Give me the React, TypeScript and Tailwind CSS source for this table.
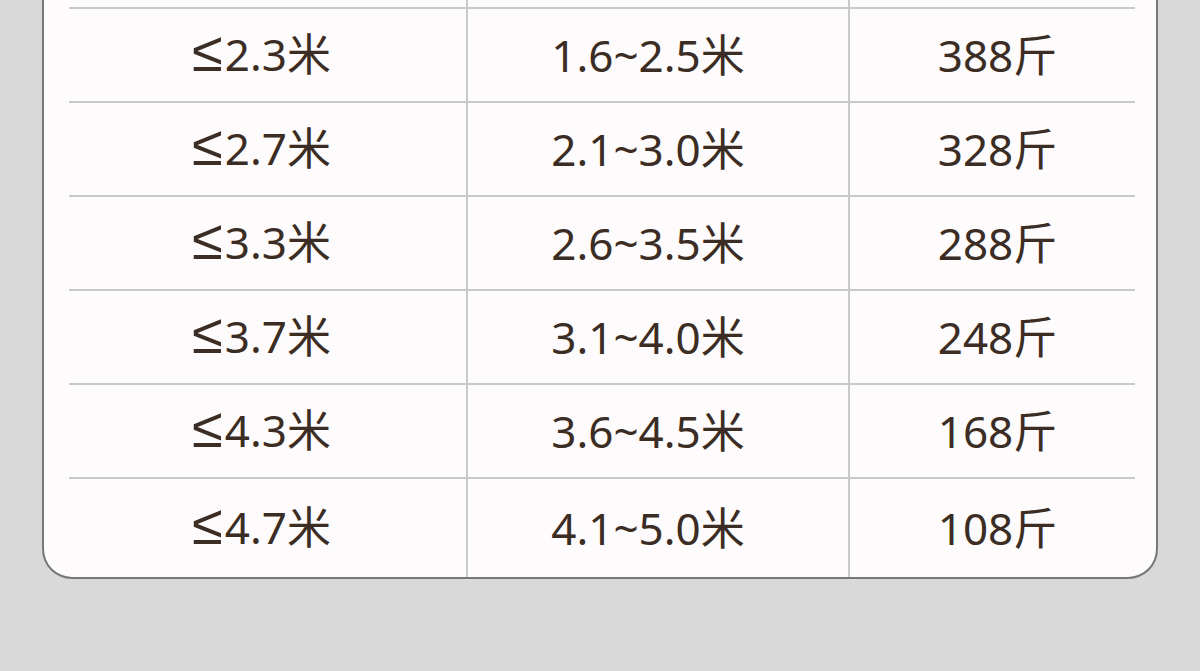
import React from "react";

const rows: [string, string, string][] = [
  ["2.3米", "1.6~2.5米", "388斤"],
  ["2.7米", "2.1~3.0米", "328斤"],
  ["3.3米", "2.6~3.5米", "288斤"],
  ["3.7米", "3.1~4.0米", "248斤"],
  ["4.3米", "3.6~4.5米", "168斤"],
  ["4.7米", "4.1~5.0米", "108斤"],
];

export default function App() {
  return (
    <div
      className="h-[671px] w-[1200px] bg-[#d9d9d9] overflow-hidden flex flex-col justify-end pb-[92px]"
      style={{ fontFamily: '"Noto Sans", "Noto Sans CJK SC", sans-serif' }}
    >
      <div className="ml-[42px] w-[1116px] shrink-0 border-2 border-t-0 border-[#777777] rounded-b-[30px] bg-[#fdfbfb] pl-[25px] pr-[21px]">
        <div className="grid grid-cols-[399px_382px_1fr] text-[#3b2c24] text-[44px] leading-none">
          <div className="h-[94px] border-b-2 border-r-2 border-[#c9c9c9]" />
          <div className="h-[94px] border-b-2 border-r-2 border-[#c9c9c9]" />
          <div className="h-[94px] border-b-2 border-[#c9c9c9]" />
          {rows.map((r, i) => {
            const last = i === rows.length - 1;
            const h = last ? "h-[98px]" : "h-[94px] border-b-2";
            return (
              <React.Fragment key={i}>
                <div className={`${h} border-r-2 border-[#c9c9c9] flex items-center justify-center pr-[12px]`}>
                  <span className="flex items-baseline -translate-y-[3px]">
                    <span
                      style={{ fontFamily: '"Liberation Sans", sans-serif' }}
                      className="text-[56px] leading-none mr-[2px]"
                    >
                      ≤
                    </span>
                    <span>{r[0]}</span>
                  </span>
                </div>
                <div className={`${h} border-r-2 border-[#c9c9c9] flex items-center justify-center pr-[20px]`}>
                  {r[1]}
                </div>
                <div className={`${h} border-[#c9c9c9] flex items-center justify-center pl-[10px]`}>
                  {r[2]}
                </div>
              </React.Fragment>
            );
          })}
        </div>
      </div>
    </div>
  );
}
